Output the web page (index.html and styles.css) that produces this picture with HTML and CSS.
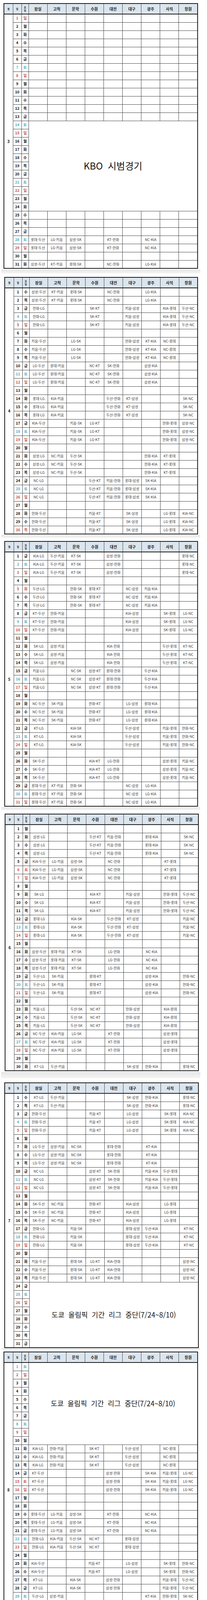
FILE: index.html
```html
<!DOCTYPE html>
<html lang="ko">
<head>
<meta charset="utf-8">
<title>2020 KBO 경기 일정</title>
<link rel="stylesheet" href="styles.css">
</head>
<body>

<section class="month mar">
<table class="sched">
<colgroup><col class="cm"><col class="cd"><col class="cw"><col span="9"></colgroup>
<thead><tr><th class="tiny">월<th class="tiny">일<th class="tiny">요<br>일<th>잠실<th>고척<th>문학<th>수원<th>대전<th>대구<th>광주<th>사직<th>창원</tr></thead>
<tbody>
<tr class="sun"><th class="m" rowspan="31">3<th>1<th>일<td><td><td><td><td><td><td><td><td>
<tr><th>2<th>월<td><td><td><td><td><td><td><td><td>
<tr><th>3<th>화<td><td><td><td><td><td><td><td><td>
<tr><th>4<th>수<td><td><td><td><td><td><td><td><td>
<tr><th>5<th>목<td><td><td><td><td><td><td><td><td>
<tr><th>6<th>금<td><td><td><td><td><td><td><td><td>
<tr class="sat"><th>7<th>토<td><td><td><td><td><td><td><td><td>
<tr class="sun"><th>8<th>일<td><td><td><td><td><td><td><td><td>
<tr><th>9<th>월<td><td><td><td><td><td><td><td><td>
<tr><th>10<th>화<td><td><td><td><td><td><td><td><td>
<tr><th>11<th>수<td><td><td><td><td><td><td><td><td>
<tr><th>12<th>목<td><td><td><td><td><td><td><td><td>
<tr><th>13<th>금<td><td><td><td><td><td><td><td><td>
<tr class="sat"><th>14<th>토<td class="note kbo" colspan="9" rowspan="11">KBO 시범경기
<tr class="sun"><th>15<th>일
<tr><th>16<th>월
<tr><th>17<th>화
<tr><th>18<th>수
<tr><th>19<th>목
<tr><th>20<th>금
<tr class="sat"><th>21<th>토
<tr class="sun"><th>22<th>일
<tr><th>23<th>월
<tr><th>24<th>화
<tr><th>25<th>수<td><td><td><td><td><td><td><td><td>
<tr><th>26<th>목<td><td><td><td><td><td><td><td><td>
<tr><th>27<th>금<td><td><td><td><td><td><td><td><td>
<tr class="sat"><th>28<th>토<td>롯데-두산<td>LG-키움<td>삼성-SK<td><td>KT-한화<td><td>NC-KIA<td><td>
<tr class="sun"><th>29<th>일<td>롯데-두산<td>LG-키움<td>삼성-SK<td><td>KT-한화<td><td>NC-KIA<td><td>
<tr><th>30<th>월<td><td><td><td><td><td><td><td><td>
<tr><th>31<th>화<td>삼성-두산<td>KT-키움<td>롯데-SK<td><td>NC-한화<td><td>LG-KIA<td><td>
</tbody>
</table>
</section>

<section class="month apr">
<table class="sched">
<colgroup><col class="cm"><col class="cd"><col class="cw"><col span="9"></colgroup>
<thead><tr><th class="tiny">월<th class="tiny">일<th class="tiny">요<br>일<th>잠실<th>고척<th>문학<th>수원<th>대전<th>대구<th>광주<th>사직<th>창원</tr></thead>
<tbody>
<tr><th class="m" rowspan="30">4<th>1<th>수<td>삼성-두산<td>KT-키움<td>롯데-SK<td><td>NC-한화<td><td>LG-KIA<td><td>
<tr><th>2<th>목<td>삼성-두산<td>KT-키움<td>롯데-SK<td><td>NC-한화<td><td>LG-KIA<td><td>
<tr><th>3<th>금<td>한화-LG<td><td><td>SK-KT<td><td>키움-삼성<td><td>KIA-롯데<td>두산-NC
<tr class="sat"><th>4<th>토<td>한화-LG<td><td><td>SK-KT<td><td>키움-삼성<td><td>KIA-롯데<td>두산-NC
<tr class="sun"><th>5<th>일<td>한화-LG<td><td><td>SK-KT<td><td>키움-삼성<td><td>KIA-롯데<td>두산-NC
<tr><th>6<th>월<td><td><td><td><td><td><td><td><td>
<tr><th>7<th>화<td>키움-두산<td><td>LG-SK<td><td><td>한화-삼성<td>KT-KIA<td>NC-롯데<td>
<tr><th>8<th>수<td>키움-두산<td><td>LG-SK<td><td><td>한화-삼성<td>KT-KIA<td>NC-롯데<td>
<tr><th>9<th>목<td>키움-두산<td><td>LG-SK<td><td><td>한화-삼성<td>KT-KIA<td>NC-롯데<td>
<tr><th>10<th>금<td>LG-두산<td>롯데-키움<td><td>NC-KT<td>SK-한화<td><td>삼성-KIA<td><td>
<tr class="sat"><th>11<th>토<td>LG-두산<td>롯데-키움<td><td>NC-KT<td>SK-한화<td><td>삼성-KIA<td><td>
<tr class="sun"><th>12<th>일<td>LG-두산<td>롯데-키움<td><td>NC-KT<td>SK-한화<td><td>삼성-KIA<td><td>
<tr><th>13<th>월<td><td><td><td><td><td><td><td><td>
<tr><th>14<th>화<td>롯데-LG<td>KIA-키움<td><td><td>두산-한화<td>KT-삼성<td><td><td>SK-NC
<tr><th>15<th>수<td>롯데-LG<td>KIA-키움<td><td><td>두산-한화<td>KT-삼성<td><td><td>SK-NC
<tr><th>16<th>목<td>롯데-LG<td>KIA-키움<td><td><td>두산-한화<td>KT-삼성<td><td><td>SK-NC
<tr><th>17<th>금<td>KIA-두산<td><td>키움-SK<td>LG-KT<td><td><td><td>한화-롯데<td>삼성-NC
<tr class="sat"><th>18<th>토<td>KIA-두산<td><td>키움-SK<td>LG-KT<td><td><td><td>한화-롯데<td>삼성-NC
<tr class="sun"><th>19<th>일<td>KIA-두산<td><td>키움-SK<td>LG-KT<td><td><td><td>한화-롯데<td>삼성-NC
<tr><th>20<th>월<td><td><td><td><td><td><td><td><td>
<tr><th>21<th>화<td>삼성-LG<td>NC-키움<td>두산-SK<td><td><td><td>한화-KIA<td>KT-롯데<td>
<tr><th>22<th>수<td>삼성-LG<td>NC-키움<td>두산-SK<td><td><td><td>한화-KIA<td>KT-롯데<td>
<tr><th>23<th>목<td>삼성-LG<td>NC-키움<td>두산-SK<td><td><td><td>한화-KIA<td>KT-롯데<td>
<tr><th>24<th>금<td>NC-LG<td><td><td>두산-KT<td>키움-한화<td>롯데-삼성<td>SK-KIA<td><td>
<tr class="sat"><th>25<th>토<td>NC-LG<td><td><td>두산-KT<td>키움-한화<td>롯데-삼성<td>SK-KIA<td><td>
<tr class="sun"><th>26<th>일<td>NC-LG<td><td><td>두산-KT<td>키움-한화<td>롯데-삼성<td>SK-KIA<td><td>
<tr><th>27<th>월<td><td><td><td><td><td><td><td><td>
<tr><th>28<th>화<td>한화-두산<td><td><td>키움-KT<td><td>SK-삼성<td><td>LG-롯데<td>KIA-NC
<tr><th>29<th>수<td>한화-두산<td><td><td>키움-KT<td><td>SK-삼성<td><td>LG-롯데<td>KIA-NC
<tr class="sun"><th>30<th>목<td>한화-두산<td><td><td>키움-KT<td><td>SK-삼성<td><td>LG-롯데<td>KIA-NC
</tbody>
</table>
</section>

<section class="month may">
<table class="sched">
<colgroup><col class="cm"><col class="cd"><col class="cw"><col span="9"></colgroup>
<thead><tr><th class="tiny">월<th class="tiny">일<th class="tiny">요<br>일<th>잠실<th>고척<th>문학<th>수원<th>대전<th>대구<th>광주<th>사직<th>창원</tr></thead>
<tbody>
<tr><th class="m" rowspan="31">5<th>1<th>금<td>KIA-LG<td>두산-키움<td>KT-SK<td><td>삼성-한화<td><td><td><td>롯데-NC
<tr class="sat"><th>2<th>토<td>KIA-LG<td>두산-키움<td>KT-SK<td><td>삼성-한화<td><td><td><td>롯데-NC
<tr class="sun"><th>3<th>일<td>KIA-LG<td>두산-키움<td>KT-SK<td><td>삼성-한화<td><td><td><td>롯데-NC
<tr><th>4<th>월<td><td><td><td><td><td><td><td><td>
<tr class="sun"><th>5<th>화<td>두산-LG<td><td>한화-SK<td>롯데-KT<td><td>NC-삼성<td>키움-KIA<td><td>
<tr><th>6<th>수<td>두산-LG<td><td>한화-SK<td>롯데-KT<td><td>NC-삼성<td>키움-KIA<td><td>
<tr><th>7<th>목<td>두산-LG<td><td>한화-SK<td>롯데-KT<td><td>NC-삼성<td>키움-KIA<td><td>
<tr><th>8<th>금<td>KT-두산<td>한화-키움<td><td><td><td>KIA-삼성<td><td>SK-롯데<td>LG-NC
<tr class="sat"><th>9<th>토<td>KT-두산<td>한화-키움<td><td><td><td>KIA-삼성<td><td>SK-롯데<td>LG-NC
<tr class="sun"><th>10<th>일<td>KT-두산<td>한화-키움<td><td><td><td>KIA-삼성<td><td>SK-롯데<td>LG-NC
<tr><th>11<th>월<td><td><td><td><td><td><td><td><td>
<tr><th>12<th>화<td>SK-LG<td>삼성-키움<td><td><td>KIA-한화<td><td><td>두산-롯데<td>KT-NC
<tr><th>13<th>수<td>SK-LG<td>삼성-키움<td><td><td>KIA-한화<td><td><td>두산-롯데<td>KT-NC
<tr><th>14<th>목<td>SK-LG<td>삼성-키움<td><td><td>KIA-한화<td><td><td>두산-롯데<td>KT-NC
<tr><th>15<th>금<td>키움-LG<td><td>NC-SK<td>삼성-KT<td>롯데-한화<td><td>두산-KIA<td><td>
<tr class="sat"><th>16<th>토<td>키움-LG<td><td>NC-SK<td>삼성-KT<td>롯데-한화<td><td>두산-KIA<td><td>
<tr class="sun"><th>17<th>일<td>키움-LG<td><td>NC-SK<td>삼성-KT<td>롯데-한화<td><td>두산-KIA<td><td>
<tr><th>18<th>월<td><td><td><td><td><td><td><td><td>
<tr><th>19<th>화<td>NC-두산<td>SK-키움<td><td>한화-KT<td><td>LG-삼성<td>롯데-KIA<td><td>
<tr><th>20<th>수<td>NC-두산<td>SK-키움<td><td>한화-KT<td><td>LG-삼성<td>롯데-KIA<td><td>
<tr><th>21<th>목<td>NC-두산<td>SK-키움<td><td>한화-KT<td><td>LG-삼성<td>롯데-KIA<td><td>
<tr><th>22<th>금<td>KT-LG<td><td>KIA-SK<td><td><td>두산-삼성<td><td>키움-롯데<td>한화-NC
<tr class="sat"><th>23<th>토<td>KT-LG<td><td>KIA-SK<td><td><td>두산-삼성<td><td>키움-롯데<td>한화-NC
<tr class="sun"><th>24<th>일<td>KT-LG<td><td>KIA-SK<td><td><td>두산-삼성<td><td>키움-롯데<td>한화-NC
<tr><th>25<th>월<td><td><td><td><td><td><td><td><td>
<tr><th>26<th>화<td>SK-두산<td><td><td>KIA-KT<td>LG-한화<td><td><td>삼성-롯데<td>키움-NC
<tr><th>27<th>수<td>SK-두산<td><td><td>KIA-KT<td>LG-한화<td><td><td>삼성-롯데<td>키움-NC
<tr><th>28<th>목<td>SK-두산<td><td><td>KIA-KT<td>LG-한화<td><td><td>삼성-롯데<td>키움-NC
<tr><th>29<th>금<td>롯데-두산<td>KT-키움<td>한화-SK<td><td><td>NC-삼성<td>LG-KIA<td><td>
<tr class="sat"><th>30<th>토<td>롯데-두산<td>KT-키움<td>한화-SK<td><td><td>NC-삼성<td>LG-KIA<td><td>
<tr class="sun"><th>31<th>일<td>롯데-두산<td>KT-키움<td>한화-SK<td><td><td>NC-삼성<td>LG-KIA<td><td>
</tbody>
</table>
</section>

<section class="month jun">
<table class="sched">
<colgroup><col class="cm"><col class="cd"><col class="cw"><col span="9"></colgroup>
<thead><tr><th class="tiny">월<th class="tiny">일<th class="tiny">요<br>일<th>잠실<th>고척<th>문학<th>수원<th>대전<th>대구<th>광주<th>사직<th>창원</tr></thead>
<tbody>
<tr><th class="m" rowspan="30">6<th>1<th>월<td><td><td><td><td><td><td><td><td>
<tr><th>2<th>화<td>삼성-LG<td><td><td>두산-KT<td>키움-한화<td><td>롯데-KIA<td><td>SK-NC
<tr><th>3<th>수<td>삼성-LG<td><td><td>두산-KT<td>키움-한화<td><td>롯데-KIA<td><td>SK-NC
<tr><th>4<th>목<td>삼성-LG<td><td><td>두산-KT<td>키움-한화<td><td>롯데-KIA<td><td>SK-NC
<tr><th>5<th>금<td>KIA-두산<td>LG-키움<td>삼성-SK<td><td>NC-한화<td><td><td>KT-롯데<td>
<tr class="sun"><th>6<th>토<td>KIA-두산<td>LG-키움<td>삼성-SK<td><td>NC-한화<td><td><td>KT-롯데<td>
<tr class="sun"><th>7<th>일<td>KIA-두산<td>LG-키움<td>삼성-SK<td><td>NC-한화<td><td><td>KT-롯데<td>
<tr><th>8<th>월<td><td><td><td><td><td><td><td><td>
<tr><th>9<th>화<td>SK-LG<td><td><td>KIA-KT<td><td>키움-삼성<td><td>한화-롯데<td>두산-NC
<tr><th>10<th>수<td>SK-LG<td><td><td>KIA-KT<td><td>키움-삼성<td><td>한화-롯데<td>두산-NC
<tr><th>11<th>목<td>SK-LG<td><td><td>KIA-KT<td><td>키움-삼성<td><td>한화-롯데<td>두산-NC
<tr><th>12<th>금<td>롯데-LG<td><td>KIA-SK<td><td>두산-한화<td>KT-삼성<td><td><td>키움-NC
<tr class="sat"><th>13<th>토<td>롯데-LG<td><td>KIA-SK<td><td>두산-한화<td>KT-삼성<td><td><td>키움-NC
<tr class="sun"><th>14<th>일<td>롯데-LG<td><td>KIA-SK<td><td>두산-한화<td>KT-삼성<td><td><td>키움-NC
<tr><th>15<th>월<td><td><td><td><td><td><td><td><td>
<tr><th>16<th>화<td>삼성-두산<td>롯데-키움<td>KT-SK<td><td>LG-한화<td><td>NC-KIA<td><td>
<tr><th>17<th>수<td>삼성-두산<td>롯데-키움<td>KT-SK<td><td>LG-한화<td><td>NC-KIA<td><td>
<tr><th>18<th>목<td>삼성-두산<td>롯데-키움<td>KT-SK<td><td>LG-한화<td><td>NC-KIA<td><td>
<tr><th>19<th>금<td>두산-LG<td>SK-키움<td><td>롯데-KT<td><td><td>삼성-KIA<td><td>한화-NC
<tr class="sat"><th>20<th>토<td>두산-LG<td>SK-키움<td><td>롯데-KT<td><td><td>삼성-KIA<td><td>한화-NC
<tr class="sun"><th>21<th>일<td>두산-LG<td>SK-키움<td><td>롯데-KT<td><td><td>삼성-KIA<td><td>한화-NC
<tr><th>22<th>월<td><td><td><td><td><td><td><td><td>
<tr><th>23<th>화<td>키움-LG<td><td>두산-SK<td>NC-KT<td><td>한화-삼성<td><td>KIA-롯데<td>
<tr><th>24<th>수<td>키움-LG<td><td>두산-SK<td>NC-KT<td><td>한화-삼성<td><td>KIA-롯데<td>
<tr><th>25<th>목<td>키움-LG<td><td>두산-SK<td>NC-KT<td><td>한화-삼성<td><td>KIA-롯데<td>
<tr><th>26<th>금<td>NC-두산<td>KIA-키움<td>LG-SK<td><td>KT-한화<td><td><td>삼성-롯데<td>
<tr class="sat"><th>27<th>토<td>NC-두산<td>KIA-키움<td>LG-SK<td><td>KT-한화<td><td><td>삼성-롯데<td>
<tr class="sun"><th>28<th>일<td>NC-두산<td>KIA-키움<td>LG-SK<td><td>KT-한화<td><td><td>삼성-롯데<td>
<tr><th>29<th>월<td><td><td><td><td><td><td><td><td>
<tr><th>30<th>화<td>KT-LG<td>두산-키움<td><td><td><td>SK-삼성<td>한화-KIA<td><td>롯데-NC
</tbody>
</table>
</section>

<section class="month jul">
<table class="sched">
<colgroup><col class="cm"><col class="cd"><col class="cw"><col span="9"></colgroup>
<thead><tr><th class="tiny">월<th class="tiny">일<th class="tiny">요<br>일<th>잠실<th>고척<th>문학<th>수원<th>대전<th>대구<th>광주<th>사직<th>창원</tr></thead>
<tbody>
<tr><th class="m" rowspan="31">7<th>1<th>수<td>KT-LG<td>두산-키움<td><td><td><td>SK-삼성<td>한화-KIA<td><td>롯데-NC
<tr><th>2<th>목<td>KT-LG<td>두산-키움<td><td><td><td>SK-삼성<td>한화-KIA<td><td>롯데-NC
<tr><th>3<th>금<td>한화-두산<td><td><td>키움-KT<td><td>LG-삼성<td><td>SK-롯데<td>KIA-NC
<tr class="sat"><th>4<th>토<td>한화-두산<td><td><td>키움-KT<td><td>LG-삼성<td><td>SK-롯데<td>KIA-NC
<tr class="sun"><th>5<th>일<td>한화-두산<td><td><td>키움-KT<td><td>LG-삼성<td><td>SK-롯데<td>KIA-NC
<tr><th>6<th>월<td><td><td><td><td><td><td><td><td>
<tr><th>7<th>화<td>LG-두산<td>삼성-키움<td>NC-SK<td><td>롯데-한화<td><td>KT-KIA<td><td>
<tr><th>8<th>수<td>LG-두산<td>삼성-키움<td>NC-SK<td><td>롯데-한화<td><td>KT-KIA<td><td>
<tr><th>9<th>목<td>LG-두산<td>삼성-키움<td>NC-SK<td><td>롯데-한화<td><td>KT-KIA<td><td>
<tr><th>10<th>금<td>NC-LG<td><td><td>삼성-KT<td>SK-한화<td><td>키움-KIA<td>두산-롯데<td>
<tr class="sat"><th>11<th>토<td>NC-LG<td><td><td>삼성-KT<td>SK-한화<td><td>키움-KIA<td>두산-롯데<td>
<tr class="sun"><th>12<th>일<td>NC-LG<td><td><td>삼성-KT<td>SK-한화<td><td>키움-KIA<td>두산-롯데<td>
<tr><th>13<th>월<td><td><td><td><td><td><td><td><td>
<tr><th>14<th>화<td>SK-두산<td>NC-키움<td><td>한화-KT<td><td>KIA-삼성<td><td>LG-롯데<td>
<tr><th>15<th>수<td>SK-두산<td>NC-키움<td><td>한화-KT<td><td>KIA-삼성<td><td>LG-롯데<td>
<tr><th>16<th>목<td>SK-두산<td>NC-키움<td><td>한화-KT<td><td>KIA-삼성<td><td>LG-롯데<td>
<tr><th>17<th>금<td>한화-LG<td><td>키움-SK<td><td><td>롯데-삼성<td>두산-KIA<td><td>KT-NC
<tr class="sat"><th>18<th>토<td>한화-LG<td><td>키움-SK<td><td><td>롯데-삼성<td>두산-KIA<td><td>KT-NC
<tr class="sun"><th>19<th>일<td>한화-LG<td><td>키움-SK<td><td><td>롯데-삼성<td>두산-KIA<td><td>KT-NC
<tr><th>20<th>월<td><td><td><td><td><td><td><td><td>
<tr><th>21<th>화<td>키움-두산<td><td>롯데-SK<td>LG-KT<td>KIA-한화<td><td><td><td>삼성-NC
<tr><th>22<th>수<td>키움-두산<td><td>롯데-SK<td>LG-KT<td>KIA-한화<td><td><td><td>삼성-NC
<tr><th>23<th>목<td>키움-두산<td><td>롯데-SK<td>LG-KT<td>KIA-한화<td><td><td><td>삼성-NC
<tr><th>24<th>금<td class="note olym" colspan="9" rowspan="8">도쿄 올림픽 기간 리그 중단(7/24~8/10)
<tr class="sat"><th>25<th>토
<tr class="sun"><th>26<th>일
<tr><th>27<th>월
<tr><th>28<th>화
<tr><th>29<th>수
<tr><th>30<th>목
<tr><th>31<th>금
</tbody>
</table>
</section>

<section class="month aug">
<table class="sched">
<colgroup><col class="cm"><col class="cd"><col class="cw"><col span="9"></colgroup>
<thead><tr><th class="tiny">월<th class="tiny">일<th class="tiny">요<br>일<th>잠실<th>고척<th>문학<th>수원<th>대전<th>대구<th>광주<th>사직<th>창원</tr></thead>
<tbody>
<tr class="sat"><th class="m" rowspan="31">8<th>1<th>토<td class="note olym" colspan="9" rowspan="10">도쿄 올림픽 기간 리그 중단(7/24~8/10)
<tr class="sun"><th>2<th>일
<tr><th>3<th>월
<tr><th>4<th>화
<tr><th>5<th>수
<tr><th>6<th>목
<tr><th>7<th>금
<tr class="sat"><th>8<th>토
<tr class="sun"><th>9<th>일
<tr><th>10<th>월
<tr><th>11<th>화<td>KIA-LG<td>한화-키움<td><td>SK-KT<td><td>두산-삼성<td><td>NC-롯데<td>
<tr><th>12<th>수<td>KIA-LG<td>한화-키움<td><td>SK-KT<td><td>두산-삼성<td><td>NC-롯데<td>
<tr><th>13<th>목<td>KIA-LG<td>한화-키움<td><td>SK-KT<td><td>두산-삼성<td><td>NC-롯데<td>
<tr><th>14<th>금<td>KT-두산<td><td><td><td>삼성-한화<td><td>SK-KIA<td>키움-롯데<td>LG-NC
<tr class="sun"><th>15<th>토<td>KT-두산<td><td><td><td>삼성-한화<td><td>SK-KIA<td>키움-롯데<td>LG-NC
<tr class="sun"><th>16<th>일<td>KT-두산<td><td><td><td>삼성-한화<td><td>SK-KIA<td>키움-롯데<td>LG-NC
<tr><th>17<th>월<td><td><td><td><td><td><td><td><td>
<tr><th>18<th>화<td><td><td><td><td><td><td><td><td>
<tr><th>19<th>수<td>롯데-두산<td>LG-키움<td>삼성-SK<td><td>KT-한화<td><td>NC-KIA<td><td>
<tr><th>20<th>목<td>롯데-두산<td>LG-키움<td>삼성-SK<td><td>KT-한화<td><td>NC-KIA<td><td>
<tr><th>21<th>금<td>롯데-두산<td>LG-키움<td>삼성-SK<td><td>KT-한화<td><td>NC-KIA<td><td>
<tr class="sat"><th>22<th>토<td>한화-LG<td>KIA-키움<td>두산-SK<td>NC-KT<td><td>롯데-삼성<td><td><td>
<tr class="sun"><th>23<th>일<td>한화-LG<td>KIA-키움<td>두산-SK<td>NC-KT<td><td>롯데-삼성<td><td><td>
<tr><th>24<th>월<td><td><td><td><td><td><td><td><td>
<tr><th>25<th>화<td>KIA-두산<td><td><td>키움-KT<td><td>LG-삼성<td><td>SK-롯데<td>한화-NC
<tr><th>26<th>수<td>KIA-두산<td><td><td>키움-KT<td><td>LG-삼성<td><td>SK-롯데<td>한화-NC
<tr><th>27<th>목<td>KT-LG<td><td>KIA-SK<td><td>삼성-한화<td><td><td>키움-롯데<td>두산-NC
<tr><th>28<th>금<td>KT-LG<td><td>KIA-SK<td><td>삼성-한화<td><td><td>키움-롯데<td>두산-NC
<tr class="sat"><th>29<th>토<td>두산-LG<td>삼성-키움<td><td><td><td><td>KT-KIA<td>한화-롯데<td>SK-NC
<tr class="sun"><th>30<th>일<td>두산-LG<td>삼성-키움<td><td><td><td><td>KT-KIA<td>한화-롯데<td>SK-NC
<tr><th>31<th>월<td><td><td><td><td><td><td><td><td>
</tbody>
</table>
</section>

<section class="month sep">
<table class="sched">
<colgroup><col class="cm"><col class="cd"><col class="cw"><col span="9"></colgroup>
<thead><tr><th class="tiny">월<th class="tiny">일<th class="tiny">요<br>일<th>잠실<th>고척<th>문학<th>수원<th>대전<th>대구<th>광주<th>사직<th>창원</tr></thead>
<tbody>
<tr><th class="m" rowspan="30">9<th>1<th>화<td>한화-두산<td>NC-키움<td>LG-SK<td>롯데-KT<td><td><td>삼성-KIA<td><td>
<tr><th>2<th>수<td>한화-두산<td>NC-키움<td>LG-SK<td>롯데-KT<td><td><td>삼성-KIA<td><td>
<tr><th>3<th>목<td>NC-LG<td><td><td>SK-KT<td>키움-한화<td>두산-삼성<td><td>KIA-롯데<td>
<tr><th>4<th>금<td>NC-LG<td><td><td>SK-KT<td>키움-한화<td>두산-삼성<td><td>KIA-롯데<td>
<tr class="sat"><th>5<th>토<td>SK-두산<td>KT-키움<td><td><td>KIA-한화<td>NC-삼성<td><td>LG-롯데<td>
<tr class="sun"><th>6<th>일<td>SK-두산<td>KT-키움<td><td><td>KIA-한화<td>NC-삼성<td><td>LG-롯데<td>
<tr><th>7<th>월<td><td><td><td><td><td><td><td><td>
<tr><th>8<th>화<td>KT-두산<td><td>키움-SK<td><td><td>한화-삼성<td>LG-KIA<td><td>롯데-NC
<tr><th>9<th>수<td>KT-두산<td><td>키움-SK<td><td><td>한화-삼성<td>LG-KIA<td><td>롯데-NC
<tr><th>10<th>목<td>키움-LG<td><td><td><td>SK-한화<td><td>두산-KIA<td>삼성-롯데<td>KT-NC
<tr><th>11<th>금<td>키움-LG<td><td><td><td>SK-한화<td><td>두산-KIA<td>삼성-롯데<td>KT-NC
<tr class="sat"><th>12<th>토<td>삼성-LG<td>두산-키움<td>롯데-SK<td>한화-KT<td><td><td><td><td>KIA-NC
<tr class="sun"><th>13<th>일<td>삼성-LG<td>두산-키움<td>롯데-SK<td>한화-KT<td><td><td><td><td>KIA-NC
<tr><th>14<th>월<td><td><td><td><td><td><td><td><td>
<tr><th>15<th>화<td>NC-두산<td>롯데-키움<td><td>삼성-KT<td>LG-한화<td><td>SK-KIA<td><td>
<tr><th>16<th>수<td>NC-두산<td>롯데-키움<td><td>삼성-KT<td>LG-한화<td><td>SK-KIA<td><td>
<tr><th>17<th>목<td>롯데-LG<td>한화-키움<td>NC-SK<td>두산-KT<td><td>KIA-삼성<td><td><td>
<tr><th>18<th>금<td>롯데-LG<td>한화-키움<td>NC-SK<td>두산-KT<td><td>KIA-삼성<td><td><td>
<tr class="sat"><th>19<th>토<td>LG-두산<td><td>KT-SK<td><td><td>키움-삼성<td>한화-KIA<td>NC-롯데<td>
<tr class="sun"><th>20<th>일<td>LG-두산<td><td>KT-SK<td><td><td>키움-삼성<td>한화-KIA<td>NC-롯데<td>
<tr><th>21<th>월<td><td><td><td><td><td><td><td><td>
<tr><th>22<th>화<td>SK-LG<td><td><td><td>두산-한화<td><td>키움-KIA<td>KT-롯데<td>삼성-NC
<tr><th>23<th>수<td>SK-LG<td><td><td><td>두산-한화<td><td>키움-KIA<td>KT-롯데<td>삼성-NC
<tr><th>24<th>목<td>삼성-두산<td>SK-키움<td><td>KIA-KT<td>롯데-한화<td><td><td><td>LG-NC
<tr><th>25<th>금<td>삼성-두산<td>SK-키움<td><td>KIA-KT<td>롯데-한화<td><td><td><td>LG-NC
<tr class="sat"><th>26<th>토<td>키움-두산<td><td><td>LG-KT<td>NC-한화<td>SK-삼성<td>롯데-KIA<td><td>
<tr class="sun"><th>27<th>일<td>키움-두산<td><td><td>LG-KT<td>NC-한화<td>SK-삼성<td>롯데-KIA<td><td>
<tr><th>28<th>월<td><td><td><td><td><td><td><td><td>
<tr><th>29<th>화<td>KIA-LG<td><td>한화-SK<td><td><td>KT-삼성<td><td>두산-롯데<td>키움-NC
<tr class="sun"><th>30<th>수<td>KIA-LG<td><td>한화-SK<td><td><td>KT-삼성<td><td>두산-롯데<td>키움-NC
</tbody>
</table>
</section>

</body>
</html>
```

FILE: styles.css
```css
* { box-sizing: border-box; }

html, body {
  margin: 0;
  padding: 0;
  background: #ffffff;
}

body {
  width: 530px;
  font-family: "Noto Sans CJK KR", "Noto Sans", sans-serif;
  color: #333333;
}

/* one month block: table + the faint grey shadow strip under it */
.month {
  --x: 11px;
  --w: 496px;
  --hd: 27px;
  --sh-mt: 1px;
  --sh-h: 8px;
  --gap: 9px;
  margin-bottom: var(--gap);
}

.month::after {
  content: "";
  display: block;
  height: var(--sh-h);
  margin: var(--sh-mt) 17px 0 3px;
  background: linear-gradient(to bottom, #e6e6e6, #f4f4f4);
  border-radius: 2px;
}

.mar { padding-top: 8px; --x: 9px;  --w: 498px; --sh-mt: 2px; --sh-h: 10px; --gap: 9px; }
.apr { --x: 11px; --w: 496px; --sh-mt: 1px; --sh-h: 8px;  --gap: 8px; }
.may { --x: 11px; --w: 496px; --sh-mt: 1px; --sh-h: 8px;  --gap: 9px; }
.jun { --x: 12px; --w: 497px; --sh-mt: 2px; --sh-h: 16px; --gap: 11px; }
.jul { --x: 11px; --w: 498px; --sh-mt: 0px; --sh-h: 5px;  --gap: 4px; }
.aug { --x: 9px;  --w: 498px; --sh-mt: 2px; --sh-h: 10px; --gap: 10px; }
.sep { --x: 10px; --w: 494px; --hd: 26px; --sh-mt: 0px; --sh-h: 0px; --gap: 0px; }

/* schedule table */
.sched {
  margin-left: var(--x);
  width: var(--w);
  border-collapse: collapse;
  table-layout: fixed;
  border: 2px solid #1c1c1c;
}

.sched col.cm { width: 23px; }
.sched col.cd { width: 22px; }
.sched col.cw { width: 18px; }

.sched th,
.sched td {
  height: 21px;
  padding: 0;
  border: 1px solid #454545;
  text-align: center;
  vertical-align: middle;
  white-space: nowrap;
  overflow: hidden;
  font-size: 9px;
  line-height: 1;
}

/* header row */
.sched thead th {
  height: var(--hd);
  background: #dbe5ee;
  border-bottom: 2px solid #1c1c1c;
  color: #222222;
  font-size: 10px;
  font-weight: 700;
}

.sched thead th.tiny {
  font-size: 6px;
  line-height: 8px;
}

/* day / weekday cells */
.sched tbody th {
  font-size: 9.5px;
  font-weight: 700;
  color: #141414;
}

.sched tbody td {
  color: #3a3a3a;
  font-weight: 400;
}

.sched tr.sat th { color: #4bacc6; }
.sched tr.sun th { color: #c0504d; }

/* month number column */
.sched tbody th.m {
  color: #141414;
  font-size: 10px;
}

/* merged notice cells */
.sched td.note {
  color: #151515;
  font-weight: 400;
  line-height: 1.2;
}

.sched td.kbo {
  font-size: 24px;
  word-spacing: 6px;
}

.sched td.olym {
  font-size: 18px;
  word-spacing: 5px;
}
```
